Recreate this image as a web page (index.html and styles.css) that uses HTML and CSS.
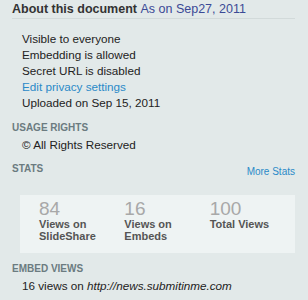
FILE: index.html
```html
<!DOCTYPE html>
<html lang="en">
<head>
    <meta charset="UTF-8">
    <title>About this document</title>
    <link rel="stylesheet" href="styles.css">
</head>
<body>
    <div class="panel">
        <h2 class="panel-title">About this document <span class="as-on">As on Sep27, 2011</span></h2>

        <ul class="info-list">
            <li>Visible to everyone</li>
            <li>Embedding is allowed</li>
            <li>Secret URL is disabled</li>
            <li><a href="#">Edit privacy settings</a></li>
            <li>Uploaded on Sep 15, 2011</li>
        </ul>

        <h3 class="section-title">Usage Rights</h3>
        <p class="section-text">&copy; All Rights Reserved</p>

        <div class="stats-head">
            <h3 class="section-title">Stats</h3>
            <a href="#" class="more-stats">More Stats</a>
        </div>
        <div class="stats-box">
            <div class="stat">
                <span class="stat-num">84</span>
                <span class="stat-label">Views on SlideShare</span>
            </div>
            <div class="stat">
                <span class="stat-num">16</span>
                <span class="stat-label">Views on Embeds</span>
            </div>
            <div class="stat">
                <span class="stat-num">100</span>
                <span class="stat-label">Total Views</span>
            </div>
        </div>

        <h3 class="section-title embed-title">Embed Views</h3>
        <p class="section-text">16 views on <em>http://news.submitinme.com</em></p>
    </div>
</body>
</html>
```

FILE: styles.css
```css
body {
    margin: 0;
    background-color: #e2e9e9;
    font-family: "Liberation Sans", Arial, sans-serif;
    color: #222;
}

.panel {
    padding: 3px 13px 0 12px;
}

.panel-title {
    margin: 0;
    padding-bottom: 2px;
    font-size: 12.5px;
    line-height: 13px;
    font-weight: bold;
    color: #333;
    border-bottom: 1px solid #d2dada;
}

.as-on {
    font-weight: normal;
    color: #3b4a96;
}

.info-list {
    list-style: none;
    margin: 12px 0 0 0;
    padding: 0 0 0 10px;
    font-size: 11.7px;
    line-height: 16px;
}

.info-list a {
    color: #2a8ac8;
    text-decoration: none;
}

.section-title {
    margin: 11px 0 0 0;
    font-size: 10px;
    line-height: 12px;
    font-weight: bold;
    text-transform: uppercase;
    color: #6b7b80;
}

.section-text {
    margin: 4px 0 0 10px;
    font-size: 11.7px;
    line-height: 14px;
}

.stats-head {
    display: flex;
    justify-content: space-between;
    align-items: flex-end;
}

.more-stats {
    margin-bottom: -2px;
    font-size: 10px;
    color: #2a8ac8;
    text-decoration: none;
}

.stats-box {
    display: flex;
    margin: 20px 0 0 8px;
    padding: 4px 0 11px 19px;
    background-color: #eef3f3;
}

.stat {
    width: 86px;
    display: flex;
    flex-direction: column;
}

.stat-num {
    font-size: 19px;
    line-height: 19px;
    color: #a8a8a8;
}

.stat-label {
    max-width: 70px;
    font-size: 11px;
    line-height: 12px;
    font-weight: bold;
    color: #555;
}

.embed-title {
    margin-top: 10px;
}
```
